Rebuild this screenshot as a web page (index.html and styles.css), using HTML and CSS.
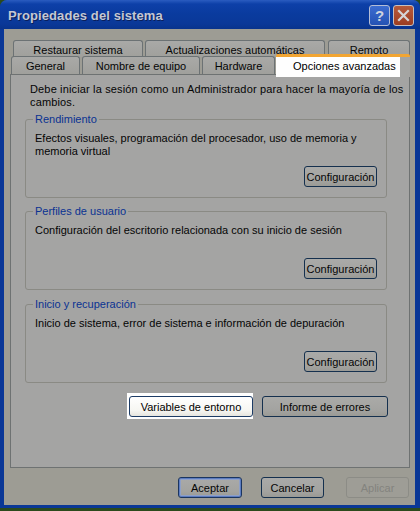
FILE: index.html
```html
<!DOCTYPE html>
<html lang="es">
<head>
<meta charset="utf-8">
<title>Propiedades del sistema</title>
<link rel="stylesheet" href="styles.css">
</head>
<body>
<div class="window">
  <div class="titlebar">
    <span class="title">Propiedades del sistema</span>
    <div class="tbtns">
      <span class="tb help">?</span>
      <span class="tb close"><svg width="13" height="13" viewBox="0 0 13 13"><path d="M2 2 L11 11 M11 2 L2 11" stroke="#d6d6d6" stroke-width="2.2" stroke-linecap="square"/></svg></span>
    </div>
  </div>
  <div class="body">
    <div class="tabs">
      <div class="tabrow r1">
        <span class="tab w-rest">Restaurar sistema</span>
        <span class="tab w-act">Actualizaciones automáticas</span>
        <span class="tab w-rem">Remoto</span>
      </div>
      <div class="tabrow r2">
        <span class="tab w-gen">General</span>
        <span class="tab w-nom">Nombre de equipo</span>
        <span class="tab w-hw">Hardware</span>
        <span class="tab sel">Opciones avanzadas</span>
      </div>
    </div>
    <div class="panel">
      <p class="intro">Debe iniciar la sesión como un Administrador para hacer la mayoría de los<br>cambios.</p>
      <fieldset class="group">
        <legend>Rendimiento</legend>
        <p class="desc">Efectos visuales, programación del procesador, uso de memoria y<br>memoria virtual</p>
        <div class="actions"><button class="btn cfg">Configuración</button></div>
      </fieldset>
      <fieldset class="group">
        <legend>Perfiles de usuario</legend>
        <p class="desc">Configuración del escritorio relacionada con su inicio de sesión</p>
        <div class="actions"><button class="btn cfg">Configuración</button></div>
      </fieldset>
      <fieldset class="group g3">
        <legend>Inicio y recuperación</legend>
        <p class="desc">Inicio de sistema, error de sistema e información de depuración</p>
        <div class="actions"><button class="btn cfg">Configuración</button></div>
      </fieldset>
      <div class="envrow">
        <span class="spot"><button class="btn hl env">Variables de entorno</button></span>
        <button class="btn env rep">Informe de errores</button>
      </div>
    </div>
    <div class="footer">
      <button class="btn fb ok">Aceptar</button>
      <button class="btn fb cancel">Cancelar</button>
      <button class="btn fb apply" disabled>Aplicar</button>
    </div>
  </div>
</div>
</body>
</html>
```

FILE: styles.css
```css
html, body {
  margin: 0;
  padding: 0;
  background: #2c4a1c;
}
body {
  width: 420px;
  height: 511px;
  overflow: hidden;
  font-family: "Liberation Sans", Arial, sans-serif;
  font-size: 11px;
  color: #050505;
}
.window {
  width: 420px;
  height: 508px;
  background: #0a3796;
  border-radius: 7px 7px 0 0;
  display: flex;
  flex-direction: column;
  box-sizing: border-box;
  padding: 0 5px 3px 4px;
}
.titlebar {
  height: 29px;
  margin: 0 -5px 0 -4px;
  padding: 0 6px 0 8px;
  display: flex;
  align-items: center;
  justify-content: space-between;
  border-radius: 7px 7px 0 0;
  background: linear-gradient(#2a5cc0 0, #0d40a8 4px, #0a3b9e 14px, #0a3898 24px, #08338c 29px);
}
.title {
  font-weight: bold;
  font-size: 13px;
  color: #c4c8d4;
  text-shadow: 1px 1px 0 #0a1f5a;
  padding-top: 1px;
  letter-spacing: 0.1px;
}
.tbtns {
  display: flex;
  gap: 3px;
  padding-top: 2px;
}
.tb {
  width: 19px;
  height: 19px;
  border: 1px solid #b4bdd6;
  border-radius: 3px;
  display: flex;
  align-items: center;
  justify-content: center;
  box-sizing: content-box;
}
.help {
  background: linear-gradient(#3c6cd0, #2452b4);
  color: #cfd3de;
  font-weight: bold;
  font-size: 15px;
  font-family: "Liberation Sans", Arial, sans-serif;
}
.close {
  background: linear-gradient(#b65a3c, #9c3e22);
  border-color: #c6c0c0;
}
.body {
  flex: 1;
  background: #9d9c94;
  padding: 11px 5px 0 6px;
  display: flex;
  flex-direction: column;
}
.tabs {
  display: flex;
  flex-direction: column;
}
.tabrow {
  display: flex;
}
.r1 {
  height: 16px;
  padding-left: 3px;
  gap: 2px;
}
.r2 {
  height: 18px;
  padding-left: 1px;
}
.tab {
  box-sizing: border-box;
  border: 1px solid #6c7274;
  border-bottom: none;
  border-radius: 3px 3px 0 0;
  background: linear-gradient(#a9a9a7, #a0a09c);
  display: flex;
  align-items: center;
  justify-content: center;
  padding-top: 1px;
  white-space: nowrap;
}
.r1 .tab { height: 17px; }
.w-rest { width: 130px; }
.w-act { width: 180px; margin-left: 0; }
.w-rem { width: 82px; margin-left: 1px; }
.w-gen { width: 69px; }
.w-nom { width: 118px; margin-left: 2px; }
.w-hw { width: 73px; margin-left: 2px; }
.sel {
  position: relative;
  z-index: 1;
  width: 134px;
  height: 23px;
  margin-top: -2px;
  margin-left: 1px;
  border: none;
  border-top: 3px solid #f2a532;
  border-radius: 2px 2px 0 0;
  background: linear-gradient(to right, #fefefe 0, #fefefe 124px, #a4a4a2 124px);
  color: #000;
  padding: 0 0 2px 0;
  justify-content: flex-start;
  padding-left: 17px;
}
.panel {
  height: 394px;
  box-sizing: border-box;
  border: 1px solid #6e7272;
  background: #a4a4a3;
  width: 400px;
}
.intro {
  margin: 8px 0 0 19px;
  line-height: 13px;
  white-space: nowrap;
  letter-spacing: 0.15px;
}
.group {
  margin: 4px 0 0 14px;
  width: 362px;
  box-sizing: border-box;
  border: 1px solid #8a8a84;
  border-radius: 3px;
  padding: 0 9px 10px 9px;
  min-width: 0;
}
.group + .group {
  margin-top: 7px;
}
.group.g3 {
  margin-top: 8px;
}
.group legend {
  color: #0a3292;
  margin-left: -2px;
  padding: 0 2px;
  line-height: 13px;
}
.desc {
  margin: 6px 0 0 0;
  height: 26px;
  line-height: 13px;
  white-space: nowrap;
}
.actions {
  display: flex;
  justify-content: flex-end;
  margin-top: 8px;
}
.btn {
  font-family: "Liberation Sans", Arial, sans-serif;
  font-size: 11px;
  color: #050505;
  box-sizing: border-box;
  height: 21px;
  border: 1px solid #15304e;
  border-radius: 3px;
  background: linear-gradient(#aaaaa8, #a3a3a0 70%, #9a9a95);
  padding: 0;
  margin: 0;
  display: flex;
  align-items: center;
  justify-content: center;
}
.cfg {
  width: 73px;
}
.envrow {
  display: flex;
  margin: 10px 0 0 116px;
  align-items: flex-start;
}
.spot {
  background: #ffffff;
  padding: 3px 0 2px 2px;
  display: flex;
}
.env {
  width: 124px;
}
.hl {
  background: linear-gradient(#ffffff, #f6f6f2 70%, #e6e5de);
  border-color: #1d3c66;
  color: #000;
}
.rep {
  margin: 3px 0 0 9px;
  width: 126px;
}
.footer {
  display: flex;
  margin-top: 9px;
}
.fb {
  width: 64px;
}
.ok {
  margin-left: 168px;
  border-color: #1b3560;
  box-shadow: inset 0 0 0 1px #5c7cc0, inset 0 0 0 2px #8ea0c8;
}
.cancel {
  margin-left: 19px;
  width: 63px;
}
.apply {
  margin-left: 22px;
  width: 63px;
  border-color: #8c8c86;
  color: #83837e;
  background: #9e9d96;
}
```
